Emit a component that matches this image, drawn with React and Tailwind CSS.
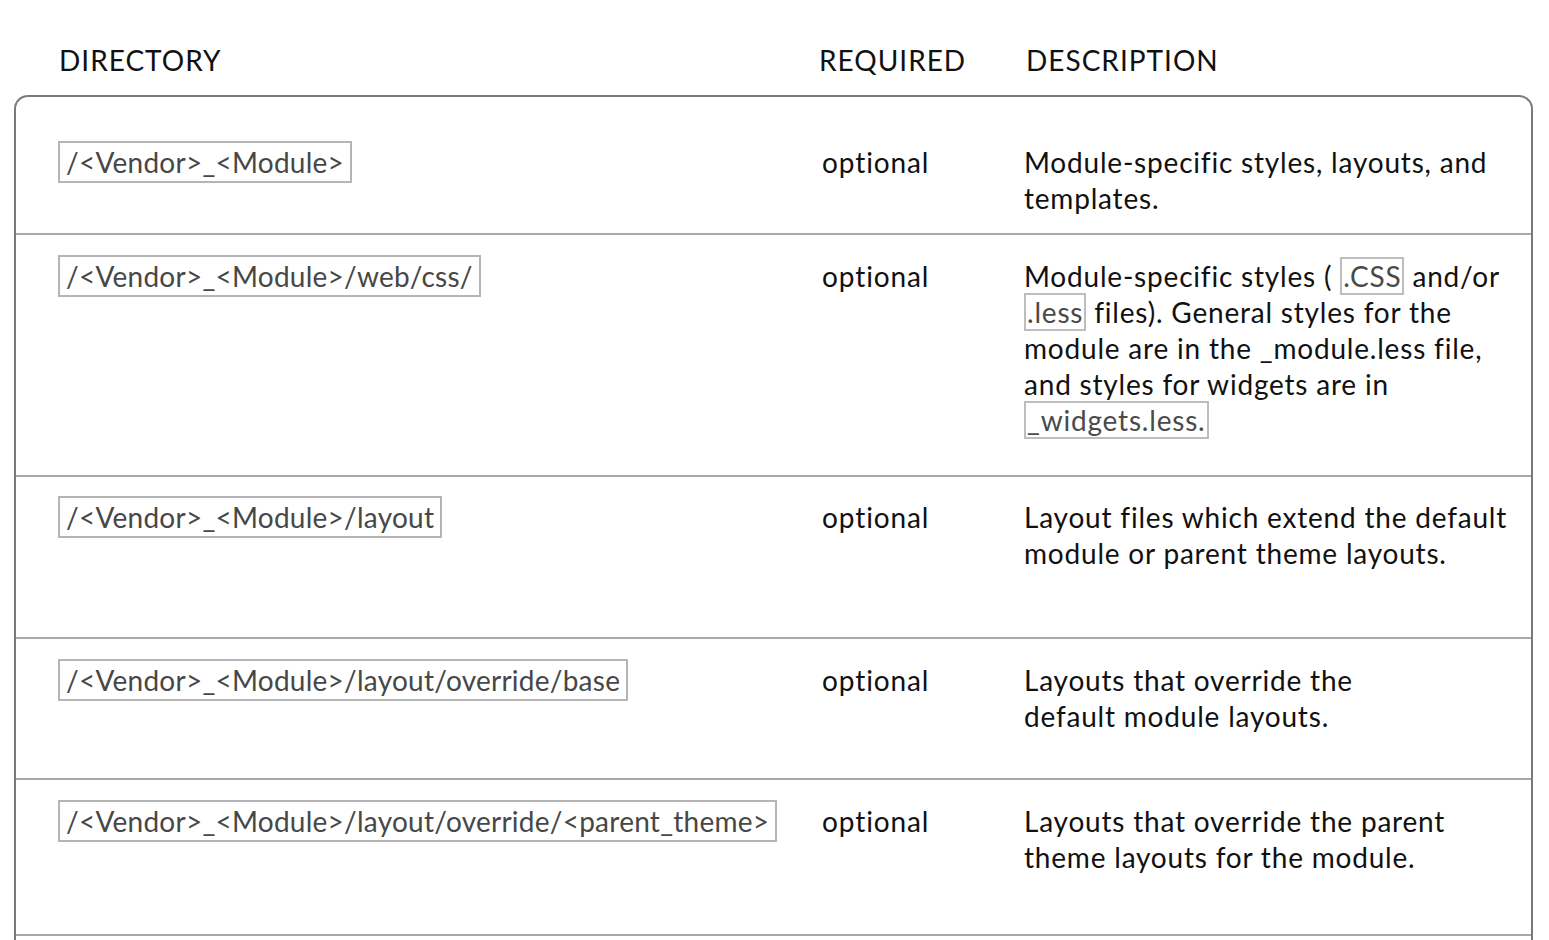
import React from 'react';

const Code = ({ children }) => (
    <span className="inline-block border-2 border-[#b5b5b5] px-[6px] py-px leading-[36px] text-[#474747] whitespace-nowrap tracking-[0.25px]">
        {children}
    </span>
);

const Inline = ({ children }) => (
    <span className="border-2 border-[#bdbdbd] px-[1px] text-[#4a4a4a]">{children}</span>
);

const rows = [
    {
        dir: '/<Vendor>_<Module>',
        desc: <>Module-specific styles, layouts, and<br />templates.</>,
        h: 'h-[136px]',
        pt: 'pt-[44px]',
        first: true,
    },
    {
        dir: '/<Vendor>_<Module>/web/css/',
        desc: (
            <>
                Module-specific styles ( <Inline>.CSS</Inline> and/or<br />
                <Inline>.less</Inline> files). General styles for the<br />
                module are in the _module.less file,<br />
                and styles for widgets are in<br />
                <Inline>_widgets.less.</Inline>
            </>
        ),
        h: 'h-[242px]',
        pt: 'pt-[20px]',
    },
    {
        dir: '/<Vendor>_<Module>/layout',
        desc: <>Layout files which extend the default<br />module or parent theme layouts.</>,
        h: 'h-[162px]',
        pt: 'pt-[19px]',
    },
    {
        dir: '/<Vendor>_<Module>/layout/override/base',
        desc: <>Layouts that override the<br />default module layouts.</>,
        h: 'h-[141px]',
        pt: 'pt-[20px]',
    },
    {
        dir: '/<Vendor>_<Module>/layout/override/<parent_theme>',
        desc: <>Layouts that override the parent<br />theme layouts for the module.</>,
        h: 'h-[156px]',
        pt: 'pt-[20px]',
    },
];

export default function App() {
    return (
        <div
            className="min-h-screen bg-white text-[28px] leading-[36px] text-[#111]"
            style={{ fontFamily: 'Lato, "Noto Sans", sans-serif' }}
        >
            {/* Header */}
            <div className="flex pt-[42px] h-[95px] tracking-[1px]">
                <div className="w-[819px] pl-[59px]">DIRECTORY</div>
                <div className="w-[207px]">REQUIRED</div>
                <div>DESCRIPTION</div>
            </div>

            {/* Table */}
            <div className="ml-[14px] mr-[16px] border-2 border-b-0 border-[#7a7a7a] rounded-t-[14px]">
                {rows.map((row) => (
                    <div
                        key={row.dir}
                        className={`flex ${row.h} ${row.pt} ${row.first ? '' : 'border-t-2 border-[#a8a8a8]'}`}
                    >
                        <div className="w-[806px] pl-[42px]">
                            <Code>{row.dir}</Code>
                        </div>
                        <div className="w-[202px] pt-[3px] tracking-[0.9px]">optional</div>
                        <div className="pt-[3px] whitespace-nowrap tracking-[0.8px]">{row.desc}</div>
                    </div>
                ))}
                {/* next row, starts at the bottom edge */}
                <div className="h-[40px] border-t-2 border-[#a8a8a8]" />
            </div>
        </div>
    );
}
